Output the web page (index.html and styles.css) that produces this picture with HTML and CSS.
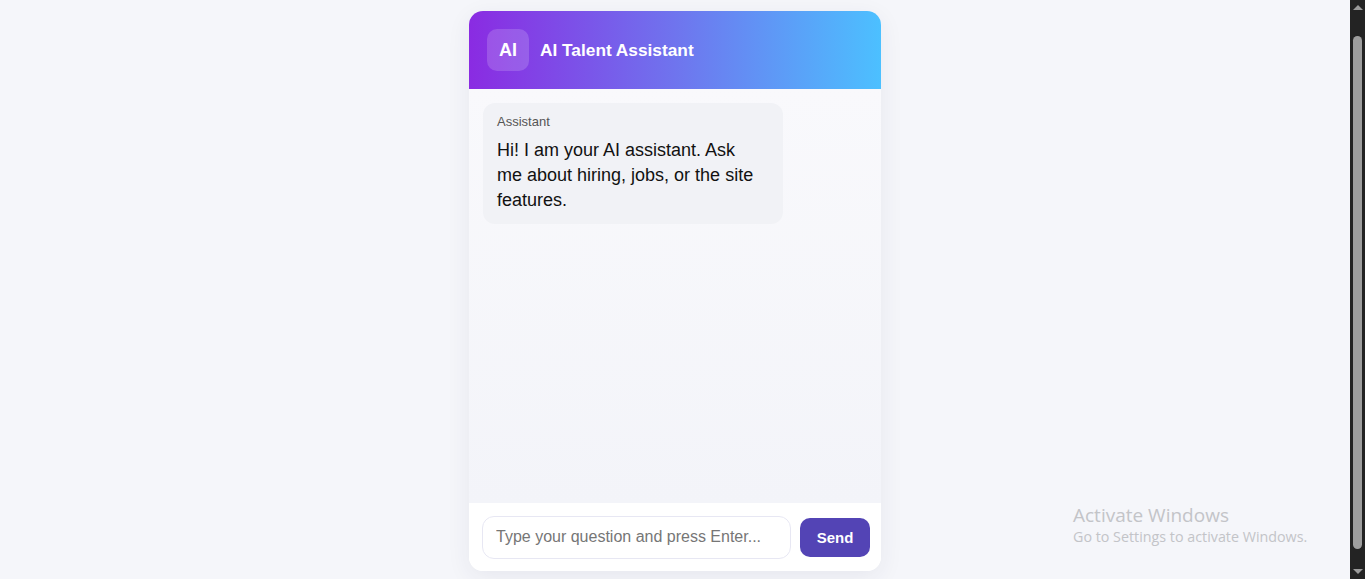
FILE: index.html
```html
<!DOCTYPE html>
<html lang="en">
<head>
<meta charset="utf-8">
<title>AI Talent Assistant</title>
<link rel="stylesheet" href="styles.css">
</head>
<body>
<div class="page">
  <main class="stage">
    <section class="chat">
      <header class="chat-header">
        <div class="avatar">AI</div>
        <h1 class="title">AI Talent Assistant</h1>
      </header>
      <div class="messages">
        <div class="bubble">
          <div class="sender">Assistant</div>
          <div class="text">Hi! I am your AI assistant. Ask me about hiring, jobs, or the site features.</div>
        </div>
      </div>
      <form class="composer">
        <input class="field" type="text" placeholder="Type your question and press Enter...">
        <button class="send" type="button">Send</button>
      </form>
    </section>
    <div class="watermark">
      <div class="wm-title">Activate Windows</div>
      <div class="wm-sub">Go to Settings to activate Windows.</div>
    </div>
  </main>
  <aside class="scrollbar">
    <div class="arrow up"></div>
    <div class="track"><div class="thumb"></div></div>
    <div class="arrow down"></div>
  </aside>
</div>
</body>
</html>
```
FILE: styles.css
```css
* { box-sizing: border-box; }
html, body { margin: 0; height: 100%; overflow: hidden; }
body {
  font-family: "Liberation Sans", Arial, sans-serif;
  background: #f5f6fa;
}
.page { display: flex; height: 100vh; }
.stage {
  flex: 1;
  position: relative;
  display: flex;
  justify-content: center;
  padding-top: 11px;
}
.chat {
  width: 412px;
  height: 560px;
  display: flex;
  flex-direction: column;
  border-radius: 14px;
  overflow: hidden;
  background: #fff;
  box-shadow: 0 6px 24px rgba(40, 40, 90, 0.07);
}
.chat-header {
  height: 78px;
  flex: none;
  display: flex;
  align-items: center;
  gap: 11px;
  padding: 0 18px;
  background: linear-gradient(90deg, #8a2be2 0%, #6f74ee 50%, #4cc0ff 100%);
}
.avatar {
  width: 42px;
  height: 42px;
  border-radius: 10px;
  background: rgba(255, 255, 255, 0.17);
  color: #fff;
  font-weight: 700;
  font-size: 18px;
  display: flex;
  align-items: center;
  justify-content: center;
}
.title {
  margin: 0;
  color: #fff;
  font-size: 17.3px;
  font-weight: 700;
}
.messages {
  flex: 1;
  padding: 14px;
  background: linear-gradient(180deg, #f9f9fc 0%, #f3f4f9 100%);
}
.bubble {
  width: 300px;
  background: #f1f2f6;
  border-radius: 12px;
  padding: 11px 20px 11px 14px;
}
.sender {
  font-size: 13px;
  color: #555;
  line-height: 15px;
  margin-bottom: 9px;
}
.text {
  font-size: 18px;
  line-height: 25px;
  color: #111;
}
.composer {
  margin: 0;
  flex: none;
  height: 68px;
  display: flex;
  align-items: center;
  gap: 9px;
  padding: 0 11px 0 13px;
  background: #fff;
}
.field {
  width: 309px;
  height: 43px;
  border: 1px solid #e7e7f3;
  border-radius: 12px;
  padding: 0 13px;
  font-family: "Liberation Sans", Arial, sans-serif;
  font-size: 16px;
  color: #222;
  background: #fff;
  outline: none;
}
.field::placeholder { color: #767676; }
.send {
  width: 70px;
  height: 39px;
  border: 0;
  border-radius: 10px;
  background: #5344b5;
  color: #fff;
  font-family: "Liberation Sans", Arial, sans-serif;
  font-size: 15px;
  font-weight: 700;
}
.watermark {
  position: absolute;
  left: 1073px;
  top: 502px;
  color: #c3c4c8;
  font-family: "Open Sans", "DejaVu Sans", sans-serif;
}
.wm-title { font-size: 19px; line-height: 26px; }
.wm-sub { font-size: 14.3px; line-height: 18px; }
.scrollbar {
  width: 15px;
  flex: none;
  background: #232323;
  display: flex;
  flex-direction: column;
  align-items: center;
}
.arrow { width: 0; height: 0; border-left: 5px solid transparent; border-right: 5px solid transparent; }
.arrow.up { margin-top: 5px; border-bottom: 5px solid #9b9b9b; }
.arrow.down { margin-bottom: 5px; border-top: 5px solid #9b9b9b; }
.track { flex: 1; width: 100%; padding: 26px 3px 20px; display: flex; }
.thumb { flex: 1; background: #9e9e9e; border-radius: 5px; }
```
